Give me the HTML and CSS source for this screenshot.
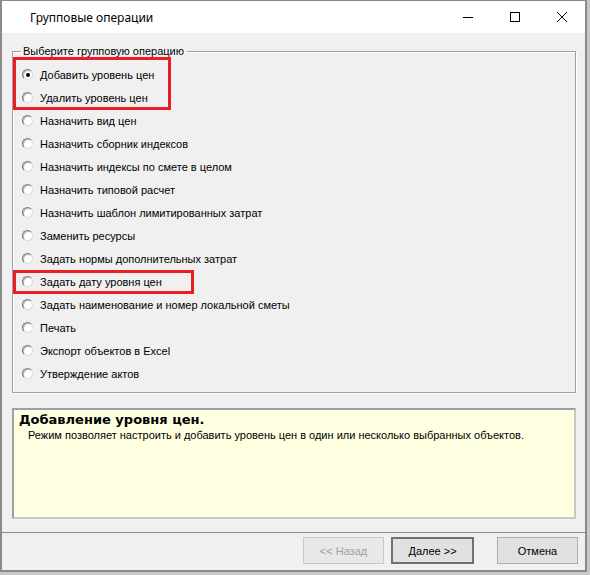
FILE: index.html
```html
<!DOCTYPE html>
<html>
<head>
<meta charset="utf-8">
<link rel="stylesheet" href="styles.css">
</head>
<body>
<div class="window">
  <div class="titlebar">
    <span class="title">Групповые операции</span>
    <div class="controls">
      <span class="ctl"><svg width="12" height="12" viewBox="0 0 12 12"><path d="M1 6.5H11" stroke="#000" stroke-width="1"/></svg></span>
      <span class="ctl"><svg width="12" height="12" viewBox="0 0 12 12"><rect x="1.5" y="1.5" width="9" height="9" fill="none" stroke="#000" stroke-width="1"/></svg></span>
      <span class="ctl"><svg width="12" height="12" viewBox="0 0 12 12"><path d="M1 1L11 11M11 1L1 11" stroke="#000" stroke-width="1"/></svg></span>
    </div>
  </div>
  <div class="body">
    <fieldset class="group">
      <legend>Выберите групповую операцию</legend>
      <div class="opts">
        <div class="highlight hl1"></div>
        <div class="highlight hl2"></div>
        <label class="opt"><span class="radio on"></span>Добавить уровень цен</label>
        <label class="opt"><span class="radio"></span>Удалить уровень цен</label>
        <label class="opt"><span class="radio"></span>Назначить вид цен</label>
        <label class="opt"><span class="radio"></span>Назначить сборник индексов</label>
        <label class="opt"><span class="radio"></span>Назначить индексы по смете в целом</label>
        <label class="opt"><span class="radio"></span>Назначить типовой расчет</label>
        <label class="opt"><span class="radio"></span>Назначить шаблон лимитированных затрат</label>
        <label class="opt"><span class="radio"></span>Заменить ресурсы</label>
        <label class="opt"><span class="radio"></span>Задать нормы дополнительных затрат</label>
        <label class="opt"><span class="radio"></span>Задать дату уровня цен</label>
        <label class="opt"><span class="radio"></span>Задать наименование и номер локальной сметы</label>
        <label class="opt"><span class="radio"></span>Печать</label>
        <label class="opt"><span class="radio"></span>Экспорт объектов в Excel</label>
        <label class="opt"><span class="radio"></span>Утверждение актов</label>
      </div>
    </fieldset>
    <div class="desc">
      <div class="desc-title">Добавление уровня цен.</div>
      <div class="desc-text">Режим позволяет настроить и добавить уровень цен в один или несколько выбранных объектов.</div>
    </div>
  </div>
  <div class="footer">
    <button class="btn disabled">&lt;&lt; Назад</button>
    <button class="btn default">Далее &gt;&gt;</button>
    <button class="btn cancel">Отмена</button>
  </div>
</div>
</body>
</html>
```
FILE: styles.css
```css
html, body {
  margin: 0;
  padding: 0;
}
body {
  background: #c8c8c8;
  width: 590px;
  height: 575px;
  overflow: hidden;
  font-family: "Liberation Sans", Arial, sans-serif;
  font-size: 11px;
  color: #000;
}
.window {
  width: 583px;
  height: 569px;
  background: #f0f0f0;
  border: 2px solid #8a8a8a;
  border-top-width: 1px;
  display: flex;
  flex-direction: column;
}
.titlebar {
  height: 32px;
  background: #fff;
  display: flex;
  align-items: center;
  flex-shrink: 0;
}
.title {
  font-family: "Noto Sans", "Liberation Sans", sans-serif;
  font-size: 12px;
  margin-left: 28px;
  flex: 1;
  color: #000;
}
.controls {
  display: flex;
  height: 32px;
}
.ctl {
  width: 46px;
  display: flex;
  align-items: center;
  justify-content: center;
  margin-left: 1px;
}
.body {
  flex: 1;
  padding: 12px 9px 0 10px;
  display: flex;
  flex-direction: column;
}
.group {
  margin: 0;
  padding: 0 0 7px 0;
  border: 1px solid #a0a0a0;
  box-shadow: inset 1px 1px 0 #fff, 1px 1px 0 #fff;
}
.group legend {
  margin-left: 8px;
  padding: 0 3px 0 2px;
  font-size: 11px;
  line-height: 13px;
}
.opts {
  position: relative;
  padding-top: 5px;
  padding-left: 9px;
}
.opt {
  display: flex;
  align-items: center;
  height: 23px;
  white-space: nowrap;
}
.radio {
  width: 11px;
  height: 11px;
  border-radius: 50%;
  border: 1px solid #7a7a7a;
  border-bottom-color: #dcdcdc;
  border-right-color: #dcdcdc;
  background: #fff;
  box-sizing: border-box;
  margin-right: 7px;
  position: relative;
  box-shadow: inset 1px 1px 0 #b8b8b8;
}
.radio.on::after {
  content: "";
  position: absolute;
  left: 3px;
  top: 3px;
  width: 4px;
  height: 4px;
  border-radius: 50%;
  background: #000;
}
.highlight {
  position: absolute;
  border: 3px solid #ec1c24;
  box-sizing: border-box;
  pointer-events: none;
}
.hl1 {
  left: 0px;
  top: -1px;
  width: 158px;
  height: 53px;
}
.hl2 {
  left: 0px;
  top: 212px;
  width: 181px;
  height: 24px;
}
.desc {
  margin-top: 15px;
  height: 111px;
  box-sizing: border-box;
  background: #ffffe1;
  border: 2px solid #a0a0a0;
  border-right-color: #c8c8c8;
  border-bottom-color: #c8c8c8;
  padding: 2px 5px;
}
.desc-title {
  font-family: "DejaVu Sans", sans-serif;
  font-weight: bold;
  font-size: 13px;
  line-height: 16px;
}
.desc-text {
  margin-left: 9px;
  line-height: 14px;
}
.footer {
  height: 38px;
  border-top: 1px solid #8a8a8a;
  display: flex;
  align-items: flex-start;
  padding-top: 4px;
  padding-left: 301px;
  box-sizing: border-box;
  flex-shrink: 0;
}
.btn {
  width: 81px;
  height: 27px;
  font-family: "Liberation Sans", Arial, sans-serif;
  font-size: 11px;
  background: #e1e1e1;
  border: 1px solid #adadad;
  color: #000;
  padding: 0;
  margin: 0;
}
.btn.disabled {
  color: #a0a0a0;
  background: #e8e8e8;
  border-color: #c8c8c8;
}
.btn.default {
  margin-left: 7px;
  border: 2px solid #707070;
  width: 83px;
}
.btn.cancel {
  margin-left: 23px;
}
```
